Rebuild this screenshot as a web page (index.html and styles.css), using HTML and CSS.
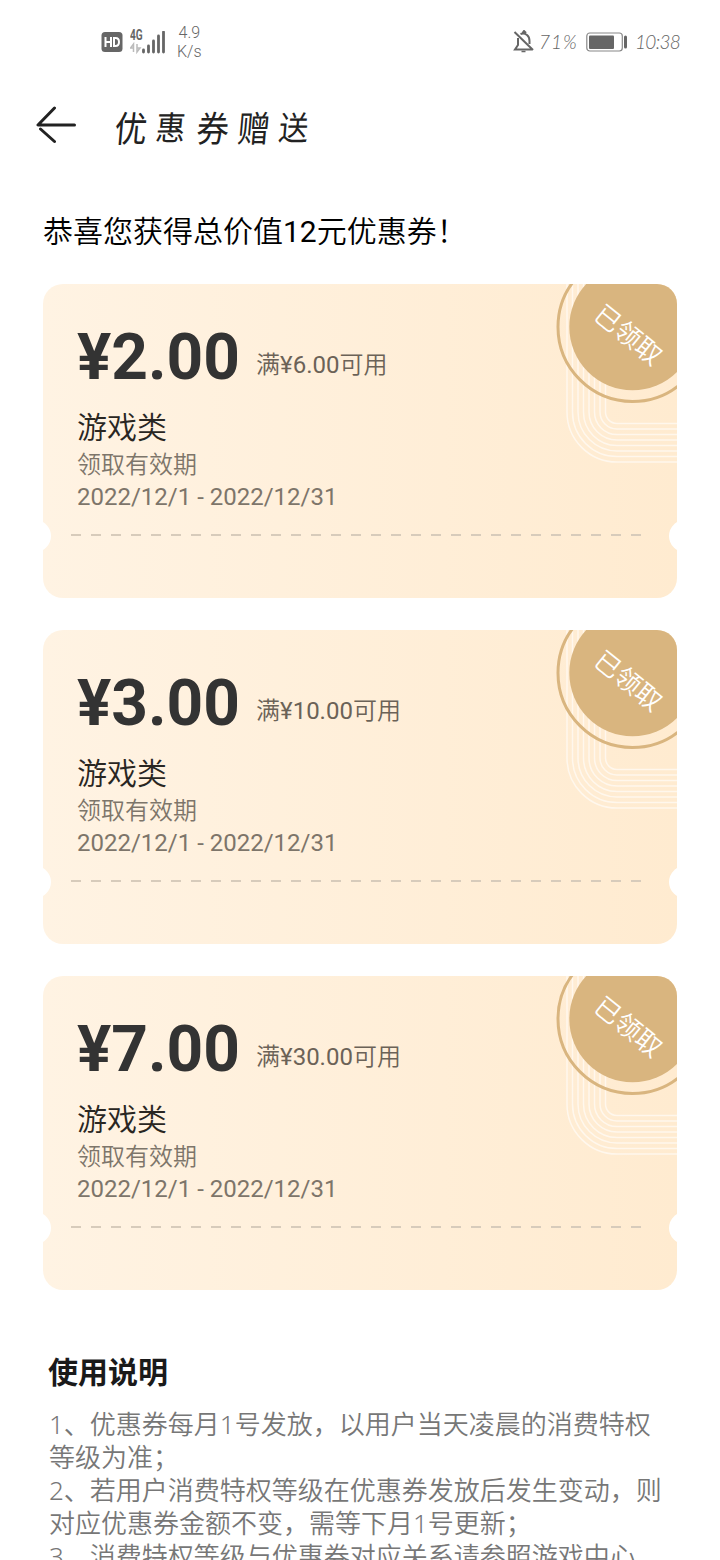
FILE: index.html
```
<!DOCTYPE html>
<html lang="zh-CN">
<head>
<meta charset="utf-8">
<title>优惠券赠送</title>
<link rel="stylesheet" href="styles.css">
</head>
<body>
<svg class="defs" width="0" height="0">
  <defs>
    <g id="received">
      <g fill="none" stroke="#fff" stroke-opacity=".6" stroke-width="1.5">
        <path d="M11 0V128a50 50 0 0 0 50 50H121"/>
        <path d="M16.500 0V128a44.500 44.500 0 0 0 44.500 44.500H121"/>
        <path d="M22 0V128a39 39 0 0 0 39 39H121"/>
        <path d="M27.500 0V128a33.500 33.500 0 0 0 33.500 33.500H121"/>
        <path d="M33 0V128a28 28 0 0 0 28 28H121"/>
        <path d="M38.500 0V128a22.500 22.500 0 0 0 22.500 22.500H121"/>
        <path d="M44 0V128a17 17 0 0 0 17 17H121"/>
        <path d="M49.500 0V128a11.500 11.500 0 0 0 11.500 11.500H121"/>
      </g>
      <circle cx="76.500" cy="43" r="63.200" fill="#d9b57f"/>
      <circle cx="76.500" cy="43" r="74.500" fill="none" stroke="#d9b57f" stroke-width="3"/>
    </g>
  </defs>
</svg>
<header class="status">
  <div class="status-left">
    <svg class="hd" width="22" height="22" viewBox="0 0 22 22"><rect x=".5" y="1" width="21" height="20" rx="3.500" fill="#666"/><path d="M4.500 6v10M10 6v10M4.500 11H10M13 7v8h1.500q3.500 0 3.500-4t-3.500-4z" fill="none" stroke="#fff" stroke-width="2"/></svg>
    <div class="network">
      <span class="gen">4G</span>
      <svg width="36" height="24" viewBox="0 0 36 24"><path d="M3.500 21v-8l-3 4h3M7 13v8l3-4h-3" fill="none" stroke="#bbb" stroke-width="1.500"/><path d="M13.500 19v2M18.500 15v6M23.500 10v11M28.500 5v16M33.500 1v20" stroke="#666" stroke-width="2.800" stroke-linecap="round"/></svg>
    </div>
    <div class="speed"><span>4.9</span><span>K/s</span></div>
  </div>
  <div class="status-right">
    <svg width="22" height="24" viewBox="0 0 22 24"><path d="M5 8v7l-3 4.500h17M7.500 4Q11 2.500 14 5q2.500 2 2.500 6v3M9.500 3l1.500-2 2 2M1.500 2l18.500 18" fill="none" stroke="#666" stroke-width="2"/><path d="M8.500 21.500h4" stroke="#666" stroke-width="1.500"/></svg>
    <span class="hand percent">71%</span>
    <svg class="battery" width="42" height="22" viewBox="0 0 42 22"><rect x=".8" y="2" width="35.500" height="18" rx="3" fill="none" stroke="#888" stroke-width="1.200"/><rect x="3" y="4.500" width="25" height="13.500" rx="1" fill="#666"/><path d="M39.500 6v10" stroke="#666" stroke-width="3" stroke-linecap="round"/></svg>
    <span class="hand clock">10:38</span>
  </div>
</header>
<nav class="titlebar">
  <svg width="42" height="40" viewBox="0 0 42 40"><path d="M18.500 3L2 20h36.500M4.500 24L18.500 36.500" fill="none" stroke="#222" stroke-width="3" stroke-linecap="round" stroke-linejoin="round"/></svg>
  <h1><span>优</span><span class="small">惠</span><span>券</span><span>赠</span><span class="small">送</span></h1>
</nav>
<main>
  <p class="intro">恭喜您获得总价值12元优惠券！</p>
  <section class="coupons">
    <article class="coupon">
      <div class="value"><strong>¥2.00</strong><span>满¥6.00可用</span></div>
      <h2>游戏类</h2>
      <p class="meta">领取有效期</p>
      <p class="meta">2022/12/1 - 2022/12/31</p>
      <div class="perforation"></div>
      <div class="seal"><svg width="121" height="190"><use href="#received"/></svg><span>已领取</span></div>
    </article>
    <article class="coupon">
      <div class="value"><strong>¥3.00</strong><span>满¥10.00可用</span></div>
      <h2>游戏类</h2>
      <p class="meta">领取有效期</p>
      <p class="meta">2022/12/1 - 2022/12/31</p>
      <div class="perforation"></div>
      <div class="seal"><svg width="121" height="190"><use href="#received"/></svg><span>已领取</span></div>
    </article>
    <article class="coupon">
      <div class="value"><strong>¥7.00</strong><span>满¥30.00可用</span></div>
      <h2>游戏类</h2>
      <p class="meta">领取有效期</p>
      <p class="meta">2022/12/1 - 2022/12/31</p>
      <div class="perforation"></div>
      <div class="seal"><svg width="121" height="190"><use href="#received"/></svg><span>已领取</span></div>
    </article>
  </section>
  <section class="notes">
    <h3>使用说明</h3>
    <p>1、优惠券每月1号发放，以用户当天凌晨的消费特权<br>等级为准；</p>
    <p>2、若用户消费特权等级在优惠券发放后发生变动，则<br>对应优惠券金额不变，需等下月1号更新；</p>
    <p>3、消费特权等级与优惠券对应关系请参照游戏中心</p>
  </section>
</main>
</body>
</html>
```
FILE: styles.css
```
* { box-sizing: border-box; margin: 0; padding: 0; }
html { height: 1560px; overflow: hidden; }
body { width: 720px; height: 1560px; overflow: hidden; background: #fff; color: #000; font-family: Roboto, "Noto Sans CJK SC DemiLight", "Noto Sans CJK SC", sans-serif; }
svg { display: block; flex: none; }
.defs { position: absolute; }
.status { height: 84px; padding: 23px 39px 0 101px; display: flex; justify-content: space-between; color: #666; }
.status-left { display: flex; height: 38px; align-items: center; }
.network { display: flex; flex-direction: column; width: 36px; height: 30px; margin-left: 7px; margin-top: -4px; }
.gen { font-size: 14px; line-height: 20px; font-weight: 700; height: 6px; transform: scaleX(.72); transform-origin: left; }
.speed { display: flex; flex-direction: column; align-items: center; margin-left: 11px; font-size: 16px; line-height: 19px; font-weight: 300; }
.status-right { display: flex; align-items: center; height: 38px; }
.hand { font-family: Lato, sans-serif; font-style: italic; font-weight: 300; font-size: 19px; line-height: 24px; white-space: nowrap; }
.percent { margin-left: 4px; width: 39px; letter-spacing: 1px; }
.battery { margin-left: 8px; }
.clock { margin-left: 7px; width: 46px; letter-spacing: -.7px; }
.titlebar { height: 84px; padding: 21px 0 0 36px; display: flex; align-items: flex-start; }
h1 { display: flex; margin-left: 37px; font-family: "Noto Sans CJK SC", sans-serif; font-size: 36px; line-height: 42px; font-weight: 400; color: #222; }
h1 span { width: 41px; transform: skewX(-5deg) scaleX(.9); transform-origin: left center; }
h1 .small { font-size: 33px; }
.intro { height: 116px; padding: 44px 0 0 43px; font-size: 30px; line-height: 40px; white-space: nowrap; }
.coupons { display: flex; flex-direction: column; gap: 32px; padding: 0 43px; }
.coupon { position: relative; height: 314px; padding: 39px 34px 0; overflow: hidden; border-radius: 20px; background: linear-gradient(90deg, #fff3e3, #ffebd0); }
.coupon::before, .coupon::after { content: ""; position: absolute; width: 32px; height: 32px; border-radius: 50%; background: #fff; top: 236px; }
.coupon::before { left: -24px; }
.coupon::after { right: -24px; }
.value { display: flex; align-items: baseline; height: 83px; line-height: 70px; }
.value strong { font-size: 64px; font-weight: 700; color: #333; }
.value span { margin: 0 0 6px 16px; font-size: 24px; color: #6b6257; transform: translateY(-6px); }
h2 { font-size: 30px; line-height: 44px; height: 43px; font-weight: 400; color: #292622; }
.meta { font-size: 24px; line-height: 32px; color: #7d756a; }
.perforation { height: 2px; margin: 21px 0 0 -6px; width: 570px; background: repeating-linear-gradient(90deg, #d7cbbb 0 10px, transparent 10px 20px); }
.seal { position: absolute; right: 0; top: 0; width: 121px; height: 190px; }
.seal span { position: absolute; left: 33px; top: 36px; width: 78px; font-size: 26px; line-height: 30px; color: #fff; text-align: center; transform: rotate(39deg); }
.notes { padding: 58px 48px 0 49px; font-family: "Noto Sans", "Noto Sans CJK SC", sans-serif; }
h3 { margin-left: -1px; font-family: "Noto Sans CJK SC", sans-serif; font-size: 30px; line-height: 44px; font-weight: 700; color: #1a1a1a; margin-bottom: 16px; }
.notes p { font-size: 26px; line-height: 33px; font-weight: 350; color: #777; white-space: nowrap; }
```
